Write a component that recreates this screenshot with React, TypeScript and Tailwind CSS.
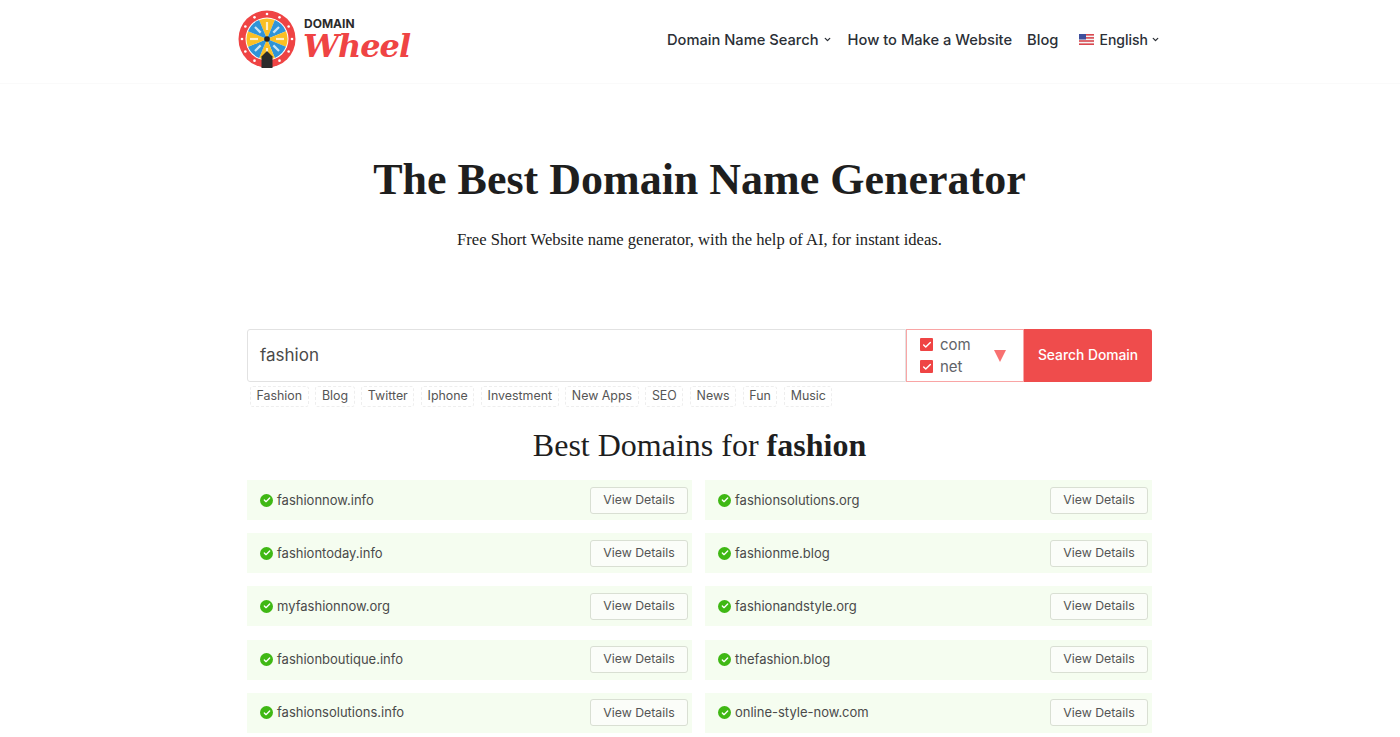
import { Check, ChevronDown } from 'lucide-react';

const sans = 'font-["Inter",sans-serif]';

const tags = ['Fashion', 'Blog', 'Twitter', 'Iphone', 'Investment', 'New Apps', 'SEO', 'News', 'Fun', 'Music'];

const domains = [
  ['fashionnow.info', 'fashionsolutions.org'],
  ['fashiontoday.info', 'fashionme.blog'],
  ['myfashionnow.org', 'fashionandstyle.org'],
  ['fashionboutique.info', 'thefashion.blog'],
  ['fashionsolutions.info', 'online-style-now.com'],
];

function WheelLogo() {
  const count = 8;
  const wedges = Array.from({ length: count }, (_, i) => {
    const a0 = ((i - 0.5) / count) * Math.PI * 2 - Math.PI / 2;
    const a1 = ((i + 0.5) / count) * Math.PI * 2 - Math.PI / 2;
    const mid = (a0 + a1) / 2;
    const r = 20.5;
    return {
      d: `M29 29 L${29 + r * Math.cos(a0)} ${29 + r * Math.sin(a0)} A${r} ${r} 0 0 1 ${29 + r * Math.cos(a1)} ${29 + r * Math.sin(a1)} Z`,
      fill: i % 2 === 0 ? '#fbbf24' : '#2f94d8',
      mx: 29 + 9 * Math.cos(mid),
      my: 29 + 9 * Math.sin(mid),
      ex: 29 + 17 * Math.cos(mid),
      ey: 29 + 17 * Math.sin(mid),
    };
  });
  const dots = Array.from({ length: 12 }, (_, i) => {
    const a = (i / 12) * Math.PI * 2;
    return [29 + 25 * Math.cos(a), 29 + 25 * Math.sin(a)];
  });
  return (
    <svg width="58" height="60" viewBox="0 0 58 60" className="shrink-0">
      <circle cx="29" cy="29" r="28.5" fill="#ef4444" />
      <circle cx="29" cy="29" r="21.5" fill="#fff" />
      {wedges.map((w, i) => (
        <path key={i} d={w.d} fill={w.fill} />
      ))}
      {wedges.map((w, i) => (
        <line key={i} x1={w.mx} y1={w.my} x2={w.ex} y2={w.ey} stroke="#fff" strokeWidth="2.2" opacity="0.75" />
      ))}
      {dots.map(([x, y], i) => (
        <circle key={i} cx={x} cy={y} r="1.3" fill="#fff" />
      ))}
      <circle cx="29" cy="29" r="2.8" fill="#222" />
      <path d="M29 41 L34.5 46.5 V58 H23.5 V46.5 Z" fill="#2b2b2b" />
    </svg>
  );
}

function UsFlag() {
  return (
    <svg width="15" height="11" viewBox="0 0 15 11" className="shrink-0">
      <rect width="15" height="11" fill="#f4f4f4" />
      <rect y="0" width="15" height="1.6" fill="#d9484f" />
      <rect y="3.1" width="15" height="1.6" fill="#d9484f" />
      <rect y="6.2" width="15" height="1.6" fill="#d9484f" />
      <rect y="9.4" width="15" height="1.6" fill="#d9484f" />
      <rect width="7" height="5.5" fill="#3f4f9c" />
    </svg>
  );
}

function CheckBox({ label }: { label: string }) {
  return (
    <div className="flex items-center gap-[7px]">
      <span className="flex h-[13px] w-[13px] items-center justify-center rounded-[1px] bg-[#ef4444]">
        <Check size={10} strokeWidth={3.5} className="text-white" />
      </span>
      <span className="text-[15px] leading-[22px] text-[#5f6368]">{label}</span>
    </div>
  );
}

function DomainRow({ name }: { name: string }) {
  return (
    <div className="flex h-10 items-center justify-between bg-[#f5fdf0] pl-[13px] pr-[4px]">
      <div className="flex items-center gap-[4px]">
        <span className="flex h-[13px] w-[13px] items-center justify-center rounded-full bg-[#3fb814]">
          <Check size={8} strokeWidth={4} className="text-white" />
        </span>
        <span className="text-[13px] leading-[13px] text-[#4a4a4a]">{name}</span>
      </div>
      <button className="h-[27px] w-[98px] rounded-[3px] border border-[#d9dfd3] bg-[#fbfdf9] text-[12.3px] text-[#555]">
        View Details
      </button>
    </div>
  );
}

export default function App() {
  return (
    <div className={`h-[737px] overflow-hidden bg-white ${sans}`}>
      <header className="h-[84px] border-b border-[#fafafa]">
        <div className="ml-[238px] flex h-[80px] w-[922px] items-center justify-between">
          <div className="flex items-center gap-[7px]">
            <WheelLogo />
            <div className="-mt-[2px] flex flex-col">
              <span className="pl-px text-[12px] font-bold leading-[13px] text-[#2b2b2b]">DOMAIN</span>
              <span className='font-["DejaVu_Serif",serif] text-[32px] font-bold italic leading-[32px] tracking-[-1px] text-[#ef4444]'>
                Wheel
              </span>
            </div>
          </div>
          <nav className="flex items-center text-[14.7px] font-medium text-[#2b2f36]">
            <span>Domain Name Search</span>
            <ChevronDown size={9} strokeWidth={3.5} className="ml-[4px] mr-[16px]" />
            <span className="mr-[15px]">How to Make a Website</span>
            <span className="mr-[21px]">Blog</span>
            <UsFlag />
            <span className="ml-[5px] text-[14px]">English</span>
            <ChevronDown size={9} strokeWidth={3.5} className="ml-[3px]" />
          </nav>
        </div>
      </header>

      <main className="ml-[247px] flex w-[905px] flex-col">
        <h1 className='mt-[71px] text-center font-["Liberation_Serif",serif] text-[44px] font-bold leading-[50px] text-[#1e1e1e]'>
          The Best Domain Name Generator
        </h1>
        <p className='mt-[25px] text-center font-["Liberation_Serif",serif] text-[16.6px] leading-5 text-[#222]'>
          Free Short Website name generator, with the help of AI, for instant ideas.
        </p>

        <div className="mt-[79px] flex h-[53px]">
          <div className="flex flex-1 items-center rounded-l-[3px] border border-[#e2e2e2] pl-3 text-[17px] text-[#4a4a4a]">
            fashion
          </div>
          <div className="relative flex w-[118px] flex-col justify-center border border-[#f9a5a5] pl-[13px]">
            <CheckBox label="com" />
            <CheckBox label="net" />
            <span className="absolute right-[17px] top-[20px] h-0 w-0 border-x-[6px] border-t-[12px] border-x-transparent border-t-[#f87171]" />
          </div>
          <button className="w-[128px] rounded-r-[3px] bg-[#ef4c4c] text-[13.8px] font-medium text-white">
            Search Domain
          </button>
        </div>

        <div className="mt-[4px] flex gap-[6.8px] pl-[3px]">
          {tags.map((t) => (
            <span
              key={t}
              className="flex h-[21px] items-center rounded-[3px] border border-dashed border-[#eeeeee] px-[5.5px] text-[12.4px] text-[#555]"
            >
              {t}
            </span>
          ))}
        </div>

        <h2 className='mt-[20px] text-center font-["Liberation_Serif",serif] text-[32px] leading-9 text-[#1e1e1e]'>
          Best Domains for <b>fashion</b>
        </h2>

        <div className="mt-[17px] grid grid-cols-[445px_447px] gap-x-[13px] gap-y-[13.2px]">
          {domains.flat().map((d) => (
            <DomainRow key={d} name={d} />
          ))}
        </div>
      </main>
    </div>
  );
}
